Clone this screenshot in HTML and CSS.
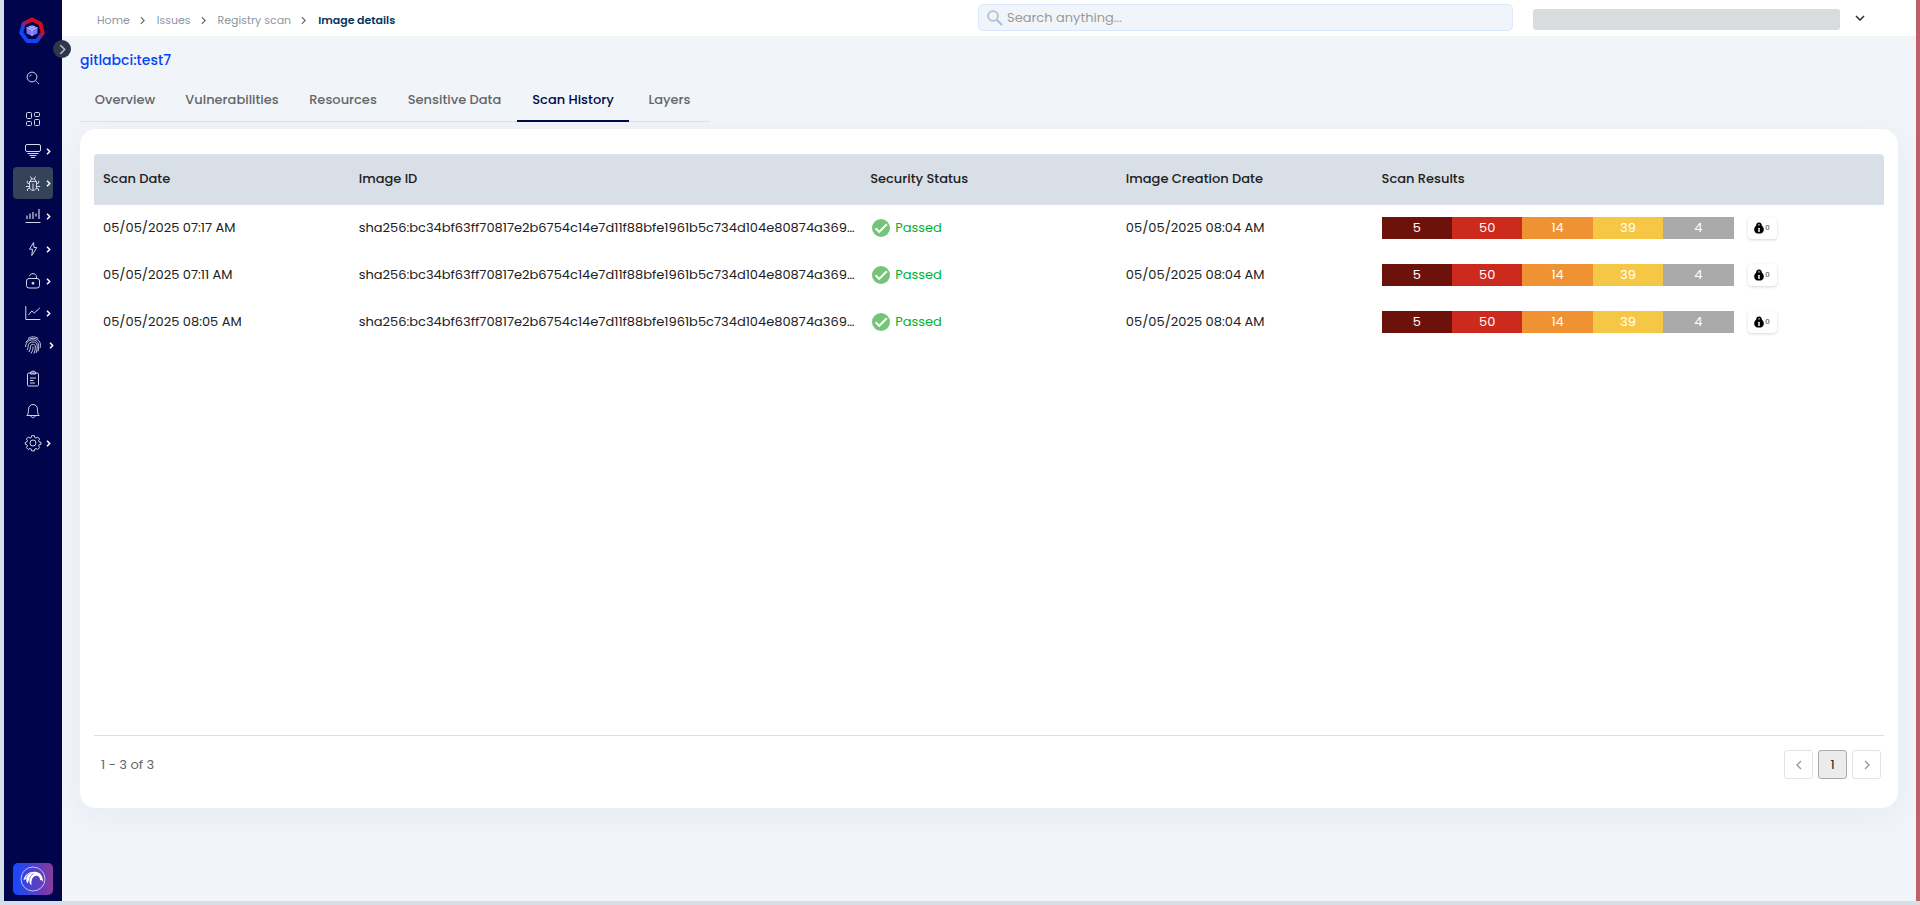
FILE: index.html
```html
<!DOCTYPE html>
<html lang="en">
<head>
<meta charset="utf-8">
<title>Image details</title>
<link rel="stylesheet" href="styles.css">
</head>
<body>
<svg class="defs" aria-hidden="true">
  <symbol id="chev" viewBox="0 0 6 10"><path d="M1 1l4 4-4 4" fill="none" stroke="currentColor" stroke-width="1.4"/></symbol>
  <symbol id="arrow" viewBox="0 0 5 7"><path d="M1 .8l2.700 2.700L1 6.200" fill="none" stroke="currentColor" stroke-width="1.5"/></symbol>
  <symbol id="check" viewBox="0 0 18 18"><circle cx="9" cy="9" r="9" fill="#74c578"/><path d="M3.600 9.200l3.600 3.700 7.600-7.600" fill="none" stroke="#fff" stroke-width="2"/></symbol>
  <symbol id="bag" viewBox="0 0 10 12"><path d="M5 .4C3 .4 2.100 1.800 2.100 3.700.8 4.700 .2 6 .2 7.700c0 2.400 1.500 3.900 4.800 3.900s4.800-1.500 4.800-3.900c0-1.700-.6-3-1.900-4C7.900 1.800 7 .4 5 .4z"/><path d="M3.900 3.500c0-2 2.200-2 2.200 0z" fill="#999"/><path d="M4 6.300c.5-.7 1.500-.7 2 0l-.4 1.300.4 2.100H4l.4-2.100z" fill="#fff"/></symbol>
</svg>
<div class="frame">
  <aside class="sidebar">
    <a class="logo" href="#" aria-label="Dashboard home">
      <svg viewBox="0 0 28 28" width="28" height="28">
        <defs><linearGradient id="lg" x1="0.2" y1="0.9" x2="0.8" y2="0.1"><stop offset=".25" stop-color="#0b45ff"/><stop offset=".75" stop-color="#d5091f"/></linearGradient></defs>
        <path d="M14 3.500l8.500 4.200 2.200 9.200-5.900 8H9.200l-5.900-8L5.500 7.700z" fill="none" stroke="url(#lg)" stroke-width="4" stroke-linejoin="round"/>
        <path d="M14 9l5.500 2.400v6L14 20l-5.500-2.600v-6z" fill="#7474f5"/>
        <path d="M8.500 11.400l5.500 2.500 5.500-2.500M14 13.900V20M11 10.200l5.600 2.500M17 10.200l-5.600 2.500" fill="none" stroke="#c9c8ff" stroke-width=".8"/>
      </svg>
    </a>
    <button class="toggle" type="button" aria-label="Expand menu"><svg width="7" height="11"><use href="#chev"/></svg></button>
    <nav>
      <ul class="nav">
        <li><a href="#" aria-label="Search"><svg class="ic" viewBox="0 0 16 16"><circle cx="7" cy="7" r="4.900"/><path d="M10.600 10.600l1.200 1.200M12.400 12.400l1.600 1.600M4.700 6.600a2.500 2.500 0 0 1 1.800-1.800"/></svg></a></li>
        <li class="gap-l"><a href="#" aria-label="Dashboard"><svg class="ic" viewBox="0 0 16 16"><rect x="1.500" y="1.500" width="5" height="6" rx="1"/><rect x="9.500" y="1.500" width="5" height="4" rx="1"/><rect x="1.500" y="10.500" width="5" height="4" rx="1"/><rect x="9.500" y="8.500" width="5" height="6" rx="1"/></svg></a></li>
        <li><a href="#" aria-label="Assets"><svg class="ic" viewBox="0 0 16 16"><rect x=".5" y="1.500" width="15" height="7" rx="1.500"/><path d="M2.500 10.500h11M4.500 12.500h7M6 14.500h4"/></svg><svg class="arr"><use href="#arrow"/></svg></a></li>
        <li><a class="active" href="#" aria-label="Issues"><svg class="ic" viewBox="0 0 16 16"><path d="M5.300 6.500a2.700 2.700 0 0 1 5.400 0zM4.500 6.500h7v5.500c0 4.500-7 4.500-7 0zM8 8.500v6.500M5.500 1.500l1.300 2.500M10.500 1.500L9.200 4M4.500 9L2.300 8V5.800M11.500 9l2.200-1V5.800M4.500 11.500H.8M11.500 11.500h3.700M5 13l-2.500 1v2M11 13l2.500 1v2"/></svg><svg class="arr"><use href="#arrow"/></svg></a></li>
        <li class="gap-s"><a href="#" aria-label="Monitoring"><svg class="ic" viewBox="0 0 16 16"><path d="M.5 14.500h15"/><path d="M2 11V7.500M5 11V5.500M8 11V4M11 8.500V5.500M14 11V1" stroke-width="1.800" opacity=".65"/></svg><svg class="arr"><use href="#arrow"/></svg></a></li>
        <li class="gap-s"><a href="#" aria-label="Runtime"><svg class="ic" viewBox="0 0 16 16"><path d="M8.500 1.500L4.500 8.200h3L6.800 14.500l5-8H9z"/></svg><svg class="arr"><use href="#arrow"/></svg></a></li>
        <li><a href="#" aria-label="Identity"><svg class="ic" viewBox="0 0 16 16"><rect x="1.500" y="5.500" width="13" height="9.500" rx="2.500"/><path d="M4.500 3.300C5-.3 11-.3 11.500 3.500v2"/><circle cx="8" cy="10.200" r="1" fill="#fff"/></svg><svg class="arr"><use href="#arrow"/></svg></a></li>
        <li><a href="#" aria-label="Reports"><svg class="ic" viewBox="0 0 16 16"><path d="M.8 1v13.500h14.500M3.500 10l3.300-4 2.500 2 5.500-5"/></svg><svg class="arr"><use href="#arrow"/></svg></a></li>
        <li><a href="#" aria-label="Compliance"><svg class="ic finger" viewBox="0 0 16 16"><path d="M3 1.500C6-.7 10.500-.7 13.200 1.500M.8 5.500C4-.1 12.500-.1 15 5.500c.6 1.500.5 3.500.2 5.500M.5 10C1 4 5 2.900 8 2.900s6 2.500 5.700 6.600c0 1.500-.2 3.500-.8 5M2.200 13C4 9.500 2 6.300 6.500 5.200s6 2 5.700 4.800c0 2-.4 4-1.200 6M4 15c2.500-4.500.3-6.500 3-7.600 2-.6 3.500.8 3.400 2.600 0 2-.6 4.500-1.500 6.500M6 16.500c2-3.500 2-5 2-7" stroke-width=".9"/></svg><svg class="arr"><use href="#arrow"/></svg></a></li>
        <li class="gap-m"><a href="#" aria-label="Policies"><svg class="ic" viewBox="0 0 16 16"><rect x="2.500" y="2" width="11" height="13" rx="1.200"/><path d="M5.500 2c0-1.500 1-1.800 2.500-1.800s2.500.3 2.500 1.800v1h-5zM5 7h6M5 9.500h3.500M5 12h5"/></svg></a></li>
        <li><a href="#" aria-label="Alerts"><svg class="ic" viewBox="0 0 16 16"><path d="M1.800 12.500c1.500-1.500 1.700-3 1.700-6C3.500 3.500 5.300 1.500 8 1.500s4.500 2 4.500 5c0 3 .2 4.500 1.700 6zM6 13c.3 2.200 3.700 2.200 4 0"/></svg></a></li>
        <li><a href="#" aria-label="Settings"><svg class="ic" viewBox="0 0 16 16"><circle cx="8" cy="8" r="3"/><path d="M6.600.7h2.800l.4 1.900 1.200.5 1.700-1 1.900 1.900-1 1.700.5 1.200 1.900.4v2l-1.900.4-.5 1.200 1 1.700-1.900 1.900-1.700-1-1.200.5-.4 1.900H6.600l-.4-1.900-1.200-.5-1.700 1-1.900-1.900 1-1.700-.5-1.200L.3 9.300v-2l1.600-.4.5-1.200-1-1.700 1.900-1.900 1.700 1 1.200-.5z"/></svg><svg class="arr"><use href="#arrow"/></svg></a></li>
      </ul>
    </nav>
    <button class="assist" type="button" aria-label="Assistant">
      <svg viewBox="0 0 26 26" width="26" height="26"><circle cx="13" cy="13" r="12" fill="none" stroke="#b9c2ff" stroke-width="1"/><path d="M3.500 14C5 8 10 5 16.500 6c4 .7 6.500 4.500 6.700 10-1-2-1.800-2.700-2.900-1.500-.3-3.500-2.500-5.500-5-4.500-3.300 1.300-4.200 4.500-3.800 9.500-1.800-1.500-2.500-3.500-2-6-1.200 1.200-1.600 2.500-1.400 4-1.500-1-2.200-2.500-1.600-4.500z" fill="#fff"/><path d="M9.500 7.500c-2 1.500-3 3-3.500 5M13.500 7.500c-2.500 1.500-3.500 3.500-4 6" fill="none" stroke="#5a49d8" stroke-width=".7"/></svg>
    </button>
  </aside>
  <div class="page">
    <header class="topbar">
      <nav class="crumbs" aria-label="Breadcrumb">
        <a href="#">Home</a><svg><use href="#chev"/></svg>
        <a href="#">Issues</a><svg><use href="#chev"/></svg>
        <a href="#">Registry scan</a><svg><use href="#chev"/></svg>
        <strong>Image details</strong>
      </nav>
      <label class="search">
        <svg viewBox="0 0 16 16" width="16" height="16"><circle cx="6" cy="6" r="4.900" fill="none" stroke="#adc0d6" stroke-width="1.800"/><path d="M9.700 9.700l5.300 5.300" stroke="#adc0d6" stroke-width="2.200"/></svg>
        <input type="search" placeholder="Search anything..." aria-label="Search anything">
      </label>
      <div class="account"></div>
      <button class="account-menu" type="button" aria-label="Account menu"><svg viewBox="0 0 10 6" width="10" height="6"><path d="M1 1l4 4 4-4" fill="none" stroke="#333" stroke-width="1.600"/></svg></button>
    </header>
    <main>
      <h1>gitlabci:test7</h1>
      <div class="tabs" role="tablist">
        <button type="button" role="tab">Overview</button>
        <button type="button" role="tab">Vulnerabilities</button>
        <button type="button" role="tab">Resources</button>
        <button type="button" role="tab">Sensitive Data</button>
        <button type="button" role="tab" aria-selected="true">Scan History</button>
        <button type="button" role="tab">Layers</button>
      </div>
      <section class="card">
        <div class="table-area">
          <table>
            <colgroup><col><col class="wide"><col><col><col class="wide"></colgroup>
            <thead><tr><th>Scan Date</th><th>Image ID</th><th>Security Status</th><th>Image Creation Date</th><th>Scan Results</th></tr></thead>
            <tbody>
              <tr>
                <td>05/05/2025 07:17 AM</td>
                <td>sha256:bc34bf63ff70817e2b6754c14e7d11f88bfe1961b5c734d104e80874a369…</td>
                <td><span class="status"><svg><use href="#check"/></svg>Passed</span></td>
                <td>05/05/2025 08:04 AM</td>
                <td><div class="results"><div class="bar"><span class="critical">5</span><span class="high">50</span><span class="medium">14</span><span class="low">39</span><span class="info">4</span></div><span class="badge"><svg><use href="#bag"/></svg>0</span></div></td>
              </tr>
              <tr>
                <td>05/05/2025 07:11 AM</td>
                <td>sha256:bc34bf63ff70817e2b6754c14e7d11f88bfe1961b5c734d104e80874a369…</td>
                <td><span class="status"><svg><use href="#check"/></svg>Passed</span></td>
                <td>05/05/2025 08:04 AM</td>
                <td><div class="results"><div class="bar"><span class="critical">5</span><span class="high">50</span><span class="medium">14</span><span class="low">39</span><span class="info">4</span></div><span class="badge"><svg><use href="#bag"/></svg>0</span></div></td>
              </tr>
              <tr>
                <td>05/05/2025 08:05 AM</td>
                <td>sha256:bc34bf63ff70817e2b6754c14e7d11f88bfe1961b5c734d104e80874a369…</td>
                <td><span class="status"><svg><use href="#check"/></svg>Passed</span></td>
                <td>05/05/2025 08:04 AM</td>
                <td><div class="results"><div class="bar"><span class="critical">5</span><span class="high">50</span><span class="medium">14</span><span class="low">39</span><span class="info">4</span></div><span class="badge"><svg><use href="#bag"/></svg>0</span></div></td>
              </tr>
            </tbody>
          </table>
        </div>
        <footer class="pager">
          <span>1 - 3 of 3</span>
          <div class="pages">
            <button type="button" aria-label="Previous page"><svg class="prev"><use href="#chev"/></svg></button>
            <button type="button" class="current">1</button>
            <button type="button" aria-label="Next page"><svg><use href="#chev"/></svg></button>
          </div>
        </footer>
      </section>
    </main>
  </div>
</div>
</body>
</html>
```
FILE: styles.css
```css
* { box-sizing: border-box; }
body {
  margin: 0;
  min-height: 100vh;
  display: flex;
  border-bottom: 4px solid #d6dfe8;
  background: #f1f5fa;
  color: #212121;
  font-family: Poppins, Inter, "Open Sans", sans-serif;
  font-size: 13px;
  line-height: 20px;
}
button, input { font: inherit; color: inherit; }
button { padding: 0; border: 0; background: none; cursor: pointer; }
a { color: inherit; text-decoration: none; }
svg { display: block; flex: none; }
.defs { position: absolute; width: 0; height: 0; }
.frame {
  flex: 1;
  min-width: 0;
  display: grid;
  grid-template-columns: 58px minmax(0, 1fr);
  border-left: 4px solid #d6dfe8;
  border-right: 4px solid #bf5f6b;
}

/* Sidebar */
.sidebar {
  position: relative;
  display: flex;
  flex-direction: column;
  padding: 16px 9px 6px;
  background: #00044a;
  color: #fff;
}
.logo { align-self: center; height: 46px; margin-right: 2px; }
.toggle {
  position: absolute;
  top: 40px;
  right: -9px;
  width: 18px;
  height: 18px;
  border-radius: 50%;
  display: grid;
  place-items: center;
  background: #2d3748;
  color: #b5bac2;
}
.nav { margin: 0; padding: 0; list-style: none; }
.nav a {
  height: 32px;
  display: flex;
  align-items: center;
  gap: 5px;
  padding-left: 12px;
  border-radius: 4px;
}
.nav a.active { background: #34425a; }
.ic { width: 16px; height: 16px; fill: none; stroke: #d5d8e8; stroke-width: 1; stroke-linejoin: round; overflow: visible; }
.finger { margin-right: 3px; }
.arr { width: 5px; height: 7px; }
.gap-s { margin-top: 1px; }
.gap-m { margin-top: 2px; }
.gap-l { margin-top: 9px; }
.assist {
  height: 32px;
  margin-top: auto;
  border-radius: 5px;
  display: grid;
  place-items: center;
  background: linear-gradient(90deg, #1348ff, #8a3a9c);
}

/* Top bar */
.page { display: flex; flex-direction: column; min-width: 0; }
.topbar {
  height: 36px;
  display: flex;
  align-items: center;
  padding: 0 51px 0 35px;
  background: #fff;
}
.crumbs {
  flex: 1;
  display: flex;
  align-items: center;
  gap: 10px;
  padding-top: 4px;
  color: #8d97a3;
  font-size: 11px;
}
.crumbs svg { width: 5px; height: 9px; margin-right: 2px; color: #666; }
.crumbs strong { color: #06365f; font-weight: 600; }
.search {
  width: 31%;
  max-width: 535px;
  height: 27px;
  display: flex;
  align-items: center;
  gap: 4px;
  padding: 0 8px;
  margin-bottom: 1px;
  border: 1px solid #d8e8fd;
  border-radius: 5px;
  background: #f1f5fa;
}
.search input { flex: 1; min-width: 0; padding: 0; border: 0; outline: 0; background: none; }
.search input::placeholder { color: #999; opacity: 1; }
.account { width: 307px; height: 21px; margin: 3px 15px 0 20px; border-radius: 3px; background: #d8dcdc; }
.account-menu { padding: 4px 0; }

/* Content */
main { flex: 1; display: flex; flex-direction: column; padding: 14px 18px 93px; }
h1 { margin: 0; font-size: 14px; font-weight: 500; line-height: 20px; color: #0644f5; }
.tabs {
  align-self: flex-start;
  display: grid;
  grid-template-columns: 90px 124px 98px 125px 112px 81px;
  margin: 9px 0 7px;
  border-bottom: 1px solid #dfe2e8;
}
.tabs button { height: 43px; border-bottom: 2px solid transparent; color: #666; font-weight: 500; margin-bottom: -1px; }
.tabs [aria-selected] { border-color: #000b45; color: #000b45; }
.card {
  flex: 1;
  display: flex;
  flex-direction: column;
  padding: 25px 14px 29px;
  border-radius: 16px;
  background: #fff;
  box-shadow: 0 8px 32px rgba(30, 45, 90, .05);
}
.table-area { flex: 1; border-bottom: 1px solid #ddd; }
table { width: 100%; table-layout: fixed; border-spacing: 0; }
col { width: 14.2857%; }
.wide { width: 28.5714%; }
th, td { padding: 0 0 0 9px; text-align: left; white-space: nowrap; overflow: hidden; text-overflow: ellipsis; }
th {
  height: 51px;
  padding-bottom: 2px;
  border: solid #dfe2f3;
  border-width: 1px 0;
  background: #d9dfe7;
  font-weight: 500;
}
th:first-child { border-top-left-radius: 4px; }
th:last-child { border-top-right-radius: 4px; }
td { height: 47px; padding-bottom: 1px; }
.status { display: flex; align-items: center; gap: 5px; padding-left: 2px; color: #00b132; }
.status svg { width: 18px; height: 18px; }
.results { display: flex; align-items: center; gap: 14px; }
.bar { flex: 0 0 352px; display: flex; height: 22px; color: #fff; line-height: 22px; text-align: center; }
.bar span { flex: 1; }
.critical { background: #6d110b; }
.high { background: #cb2a1d; }
.medium { background: #ef9234; }
.low { background: #f5c744; }
.info { background: #aaa; }
.badge {
  width: 29px;
  height: 22px;
  display: flex;
  align-items: center;
  justify-content: center;
  gap: 1px;
  border-radius: 4px;
  box-shadow: 0 1px 3px rgba(0, 0, 0, .16);
  font-size: 7px;
}
.badge svg { width: 10px; height: 12px; }
.pager { display: flex; align-items: center; justify-content: space-between; padding: 14px 3px 0 7px; color: #666; }
.pages { display: flex; gap: 5px; }
.pages button {
  width: 29px;
  height: 29px;
  display: grid;
  place-items: center;
  border: 1px solid #e4e4e4;
  border-radius: 3px;
  color: #999;
}
.pages .current { border-color: #aaa; background: #ebebeb; color: #222; }
.pages svg { width: 6px; height: 10px; }
.prev { transform: rotate(180deg); }
```
